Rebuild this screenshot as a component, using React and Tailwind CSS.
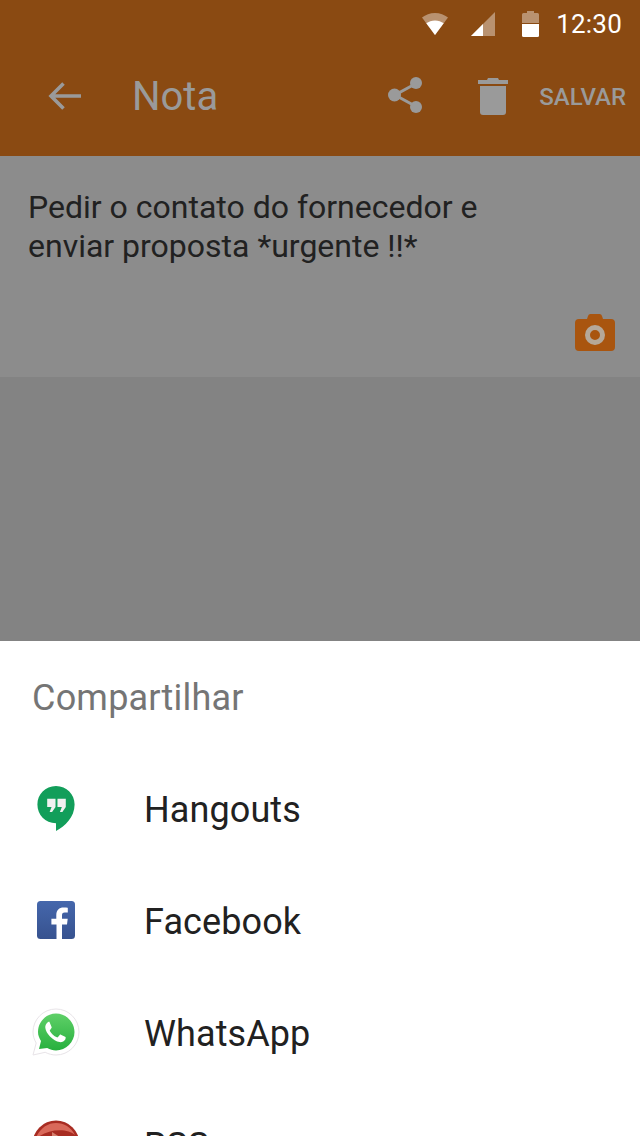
import React from 'react';

const StatusBar = () => (
  <div className="h-12 flex items-center justify-end pr-[18px] text-white">
    <svg width="28" height="24" viewBox="0 0 28 24" className="mr-[22px]">
      <path d="M14 23 1 5.500C4.500 2.800 9 1 14 1s9.500 1.800 13 4.500z" fill="#fff" fillOpacity="0.4" />
      <path d="M14 23 5.300 11.300C7.700 9.500 10.700 8.400 14 8.400s6.300 1.100 8.700 2.900z" fill="#fff" />
    </svg>
    <svg width="24" height="24" viewBox="0 0 24 24" className="mr-[27px]">
      <path d="M0 24 24 0v24z" fill="#fff" fillOpacity="0.4" />
      <path d="M0 24 12 12v12z" fill="#fff" />
    </svg>
    <svg width="17" height="26" viewBox="0 0 17 26" className="mr-[17px]">
      <path d="M5 0h7v2h3.500q1.500 0 1.500 1.500V12H0V3.500Q0 2 1.500 2H5z" fill="#fff" fillOpacity="0.4" />
      <path d="M0 13h17v11.500q0 1.500-1.500 1.500h-14Q0 26 0 24.500z" fill="#fff" />
    </svg>
    <span className="text-[26px] leading-none tracking-[0.2px]">12:30</span>
  </div>
);

const Toolbar = () => (
  <div className="h-[108px] flex items-center text-[#9a9a9a] pb-[12px]">
    <svg width="36" height="36" viewBox="0 0 36 36" className="ml-[47px]">
      <path d="M34 18H4M16.500 5.500 4 18l12.500 12.500" fill="none" stroke="#9a9a9a" strokeWidth="3.600" />
    </svg>
    <span className="ml-[49px] mt-[2px] text-[40px] leading-none">Nota</span>
    <svg width="36" height="38" viewBox="0 0 36 38" className="ml-[170px] -mt-[2px]">
      <path d="M28 7.500 7 19l21 11.500" fill="none" stroke="#9a9a9a" strokeWidth="3" />
      <circle cx="28" cy="7" r="6" fill="#9a9a9a" />
      <circle cx="6.500" cy="19" r="6.500" fill="#9a9a9a" />
      <circle cx="28" cy="31" r="6" fill="#9a9a9a" />
    </svg>
    <svg width="30" height="38" viewBox="0 0 30 38" className="ml-[54px]">
      <path d="M10 1h10l1 2h9v4H0V3h9z" fill="#9a9a9a" />
      <path d="M2 9h26v26q0 3-3 3H5q-3 0-3-3z" fill="#9a9a9a" />
    </svg>
    <span className="ml-[31px] mt-[2px] text-[24px] leading-none font-medium">SALVAR</span>
  </div>
);

const HangoutsIcon = () => (
  <svg width="40" height="46" viewBox="0 0 40 47">
    <path d="M20 1C9 1 1 9.500 1 20s8 19 19 19v8c9-4.500 19-14 19-27C39 9.500 31 1 20 1z" fill="#129e5a" />
    <path d="M11 14h8.500v8.500l-3.500 5h-2.500l2-5H11zM21.500 14H30v8.500l-3.500 5H24l2-5h-4.500z" fill="#f1f1f1" />
  </svg>
);

const FacebookIcon = () => (
  <svg width="38" height="38" viewBox="0 0 38 38">
    <defs>
      <linearGradient id="fbBg" x1="0" y1="0" x2="0" y2="1">
        <stop offset="0" stopColor="#4567ac" />
        <stop offset="1" stopColor="#37528f" />
      </linearGradient>
    </defs>
    <rect width="38" height="38" rx="3.500" fill="url(#fbBg)" />
    <path d="M26.500 38V23.500h5l.7-5.700h-5.700v-3.600c0-1.700.5-2.800 2.800-2.800h3V6.700c-.5 0-2.300-.2-4.300-.2-4.300 0-7.200 2.600-7.200 7.400v3.900h-4.900v5.700H21V38z" fill="#fff" transform="translate(-1.500 0)" />
  </svg>
);

const WhatsAppIcon = () => (
  <svg width="48" height="48" viewBox="0 0 48 48">
    <defs>
      <linearGradient id="waBg" x1="0" y1="0" x2="0" y2="1">
        <stop offset="0" stopColor="#5fd068" />
        <stop offset="1" stopColor="#27b03e" />
      </linearGradient>
    </defs>
    <path d="M1 47 4.200 35C2.200 31.600 1 28 1 24 1 11.300 11.300 1 24 1s23 10.300 23 23-10.300 23-23 23c-3.800 0-7.500-1-10.800-2.700z" fill="#fff" stroke="#e8e4e8" strokeWidth="1" />
    <path d="M7 41 9 33C7.200 30 6 27.300 6 24 6 14 14 5.500 24 5.500S42.500 14 42.500 24 34 42.500 24 42.500c-3.200 0-6-.8-8.800-2.400z" fill="url(#waBg)" />
    <path d="M18 13.500c-.6-.1-1.500 0-2.500.9-1.300 1.300-2.500 3-2.200 5.300.4 3 2 5.800 4.700 8.700 3 3.100 6.400 5 9.600 5.700 2.300.3 4.700-.9 5.700-2.700.4-.9.500-1.800.3-2.300l-4.700-2.400c-.5-.2-.9-.1-1.200.3l-1.700 2.100c-.3.300-.6.400-1.100.2-3.100-1.300-5.300-3.400-7-6.300-.2-.4-.1-.8.200-1.100l1.400-1.800c.2-.3.300-.7.100-1.100l-2-4.800c-.1-.4-.3-.6-.6-.7z" fill="#fff" />
  </svg>
);

const RssIcon = () => (
  <svg width="48" height="48" viewBox="0 0 48 48">
    <circle cx="24" cy="24" r="23.500" fill="#a82c22" />
    <path d="M3 20C7 9 15 3 24 3c8 0 15 4 19 12C36 8 14 8 3 20z" fill="#d9695a" />
    <path d="M20 12l14 9-14 8z" fill="#d67f6e" />
  </svg>
);

const ShareRow = ({ icon, label, iconClass }) => (
  <div className="h-[112px] flex items-center shrink-0">
    <div className={`w-[48px] flex justify-center ${iconClass}`}>{icon}</div>
    <span className="ml-[64px] mt-[2px] text-[36px] leading-none tracking-[0.1px] text-[#212121]">{label}</span>
  </div>
);

export default function App() {
  return (
    <div className="w-[640px] h-[1136px] overflow-hidden flex flex-col bg-[#838383] font-['Roboto',sans-serif]">
      <div className="bg-[#8a4a12] shadow-[0_2px_6px_rgba(0,0,0,0.35)] relative">
        <StatusBar />
        <Toolbar />
      </div>
      <div className="h-[221px] bg-[#8c8c8c] pl-[28px] pt-[32px] relative">
        <p className="text-[32px] leading-[39px] text-[#212121]">
          Pedir o contato do fornecedor e
          <br />
          enviar proposta *urgente !!*
        </p>
        <svg width="40" height="37" viewBox="0 0 40 37" className="absolute right-[25px] top-[158px]">
          <path d="M13 2q.5-2 2.500-2h9q2 0 2.500 2l1 3h8q4 0 4 4v24q0 4-4 4H4q-4 0-4-4V9q0-4 4-4h8z" fill="#a9550f" />
          <circle cx="20" cy="21" r="7.500" fill="none" stroke="#b5a899" strokeWidth="5" />
        </svg>
      </div>
      <div className="h-[264px] bg-[#838383]" />
      <div className="flex-1 bg-white pl-[32px] overflow-hidden">
        <div className="h-[112px] pt-[39px] text-[36px] leading-none tracking-[0.2px] text-[#757575]">Compartilhar</div>
        <ShareRow icon={<HangoutsIcon />} label="Hangouts" iconClass="-mt-[2px]" />
        <ShareRow icon={<FacebookIcon />} label="Facebook" iconClass="-mt-[2px]" />
        <ShareRow icon={<WhatsAppIcon />} label="WhatsApp" iconClass="-mt-[3px]" />
        <ShareRow icon={<RssIcon />} label="RSS" iconClass="-mt-[2px]" />
      </div>
    </div>
  );
}
